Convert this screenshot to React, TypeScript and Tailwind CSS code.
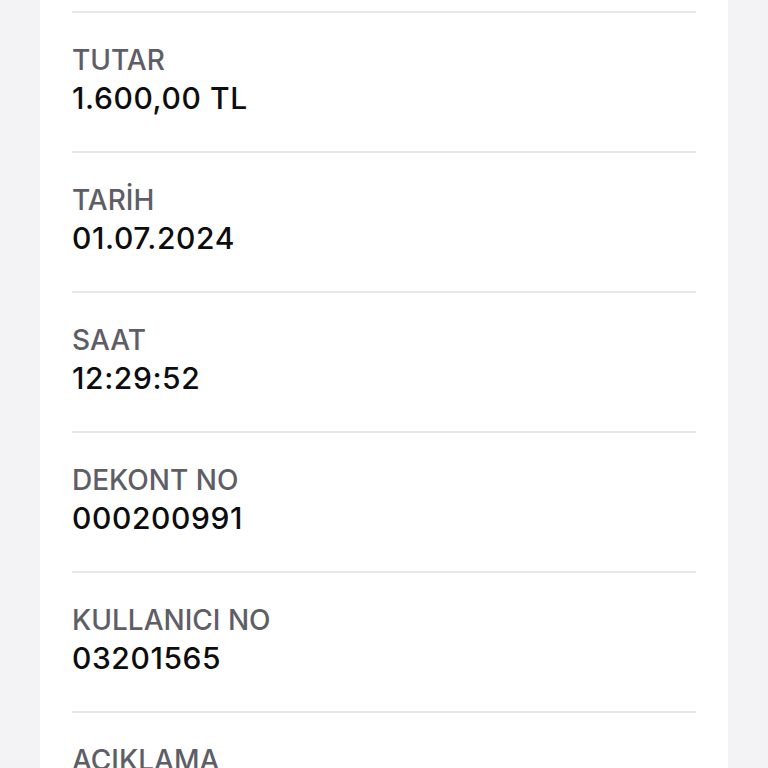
const rows = [
  { label: "TUTAR", value: "1.600,00 TL" },
  { label: "TARİH", value: "01.07.2024" },
  { label: "SAAT", value: "12:29:52" },
  { label: "DEKONT NO", value: "000200991" },
  { label: "KULLANICI NO", value: "03201565" },
  { label: "AÇIKLAMA", value: "" },
];

export default function App() {
  return (
    <div className="h-[768px] overflow-hidden bg-[#f3f3f6] px-10 font-['Inter',sans-serif]">
      <div className="h-full bg-white px-8 pt-[11px]">
        {rows.map((row) => (
          <div key={row.label} className="border-t-2 border-[#e6e6e8] pt-[30px] pb-[35px]">
            <p className="text-[28px] leading-[34px] font-medium text-[#5e5e66]">{row.label}</p>
            <p className="mt-[3px] h-[36px] text-[30px] leading-[36px] font-medium tracking-[0.6px] text-[#0d0d0f]">
              {row.value}
            </p>
          </div>
        ))}
      </div>
    </div>
  );
}
